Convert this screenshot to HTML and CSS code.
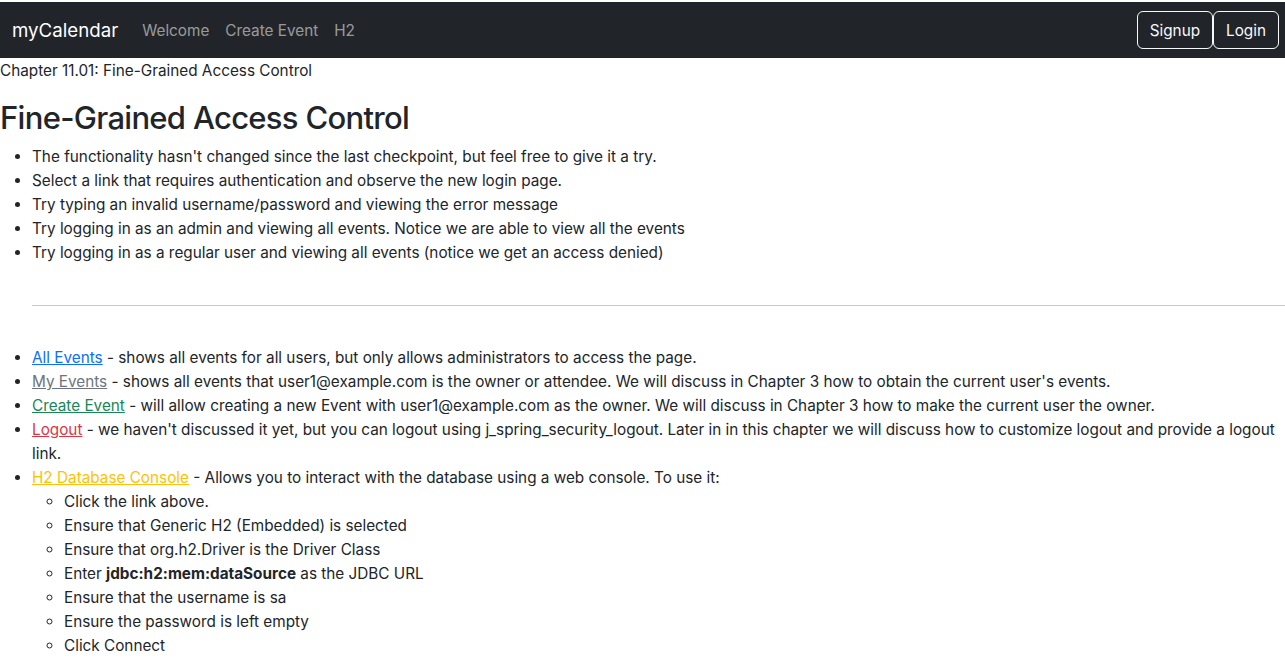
FILE: index.html
```html
<!DOCTYPE html>
<html lang="en">
<head>
<meta charset="utf-8">
<title>myCalendar</title>
<link rel="stylesheet" href="styles.css">
</head>
<body>
<nav class="navbar">
  <div class="nav-left">
    <a class="brand" href="#">myCalendar</a>
    <a class="nav-link" href="#">Welcome</a>
    <a class="nav-link" href="#">Create Event</a>
    <a class="nav-link" href="#">H2</a>
  </div>
  <div class="nav-right">
    <a class="btn" href="#">Signup</a>
    <a class="btn" href="#">Login</a>
  </div>
</nav>
<div class="chapter">Chapter 11.01: Fine-Grained Access Control</div>
<h1 class="title">Fine-Grained Access Control</h1>
<ul class="list">
  <li>The functionality hasn't changed since the last checkpoint, but feel free to give it a try.</li>
  <li>Select a link that requires authentication and observe the new login page.</li>
  <li>Try typing an invalid username/password and viewing the error message</li>
  <li>Try logging in as an admin and viewing all events. Notice we are able to view all the events</li>
  <li>Try logging in as a regular user and viewing all events (notice we get an access denied)</li>
</ul>
<hr class="divider">
<ul class="list links">
  <li><a class="l-primary" href="#">All Events</a> - shows all events for all users, but only allows administrators to access the page.</li>
  <li><a class="l-secondary" href="#">My Events</a> - shows all events that user1@example.com is the owner or attendee. We will discuss in Chapter 3 how to obtain the current user's events.</li>
  <li><a class="l-success" href="#">Create Event</a> - will allow creating a new Event with user1@example.com as the owner. We will discuss in Chapter 3 how to make the current user the owner.</li>
  <li><a class="l-danger" href="#">Logout</a> - we haven't discussed it yet, but you can logout using j_spring_security_logout. Later in in this chapter we will discuss how to customize logout and provide a logout link.</li>
  <li><a class="l-warning" href="#">H2 Database Console</a> - Allows you to interact with the database using a web console. To use it:
    <ul class="sublist">
      <li>Click the link above.</li>
      <li>Ensure that Generic H2 (Embedded) is selected</li>
      <li>Ensure that org.h2.Driver is the Driver Class</li>
      <li>Enter <strong>jdbc:h2:mem:dataSource</strong> as the JDBC URL</li>
      <li>Ensure that the username is sa</li>
      <li>Ensure the password is left empty</li>
      <li>Click Connect</li>
    </ul>
  </li>
</ul>
</body>
</html>
```
FILE: styles.css
```css
* { box-sizing: border-box; }
html, body { margin: 0; }
body {
  padding-top: 2px;
  font-family: Inter, "Liberation Sans", sans-serif;
  font-size: 15.3px;
  line-height: 24px;
  color: #212529;
  background: #fff;
}
.navbar {
  display: flex;
  align-items: center;
  justify-content: space-between;
  height: 56px;
  padding: 2px 6px 0 12px;
  background: #212529;
}
.nav-left { display: flex; align-items: center; }
.brand {
  color: #fff;
  font-size: 18.7px;
  line-height: 30px;
  text-decoration: none;
  margin-right: 16px;
}
.nav-link {
  color: rgba(255,255,255,.55);
  text-decoration: none;
  padding: 8px;
}
.nav-right { display: flex; align-items: center; margin-top: -2px; }
.btn {
  display: inline-block;
  color: #f8f9fa;
  border: 1px solid #f8f9fa;
  border-radius: 6px;
  padding: 7px 12px 5px;
  text-decoration: none;
  line-height: 24px;
}
.chapter { line-height: 24px; margin-top: 1px; }
.title {
  margin: 16px 0 9px;
  font-size: 31px;
  font-weight: 500;
  letter-spacing: -0.7px;
  line-height: 1.2;
}
.list { margin: 0; padding-left: 32px; }
.divider {
  margin: 40px 0 40px 32px;
  border: 0;
  border-top: 1px solid #212529;
  opacity: .25;
}
.sublist { padding-left: 32px; list-style: circle; margin: 0; }
.l-primary { color: #0d6efd; }
.l-secondary { color: #6c757d; }
.l-success { color: #198754; }
.l-danger { color: #dc3545; }
.l-warning { color: #ffc107; }
strong { font-weight: 700; }
```
